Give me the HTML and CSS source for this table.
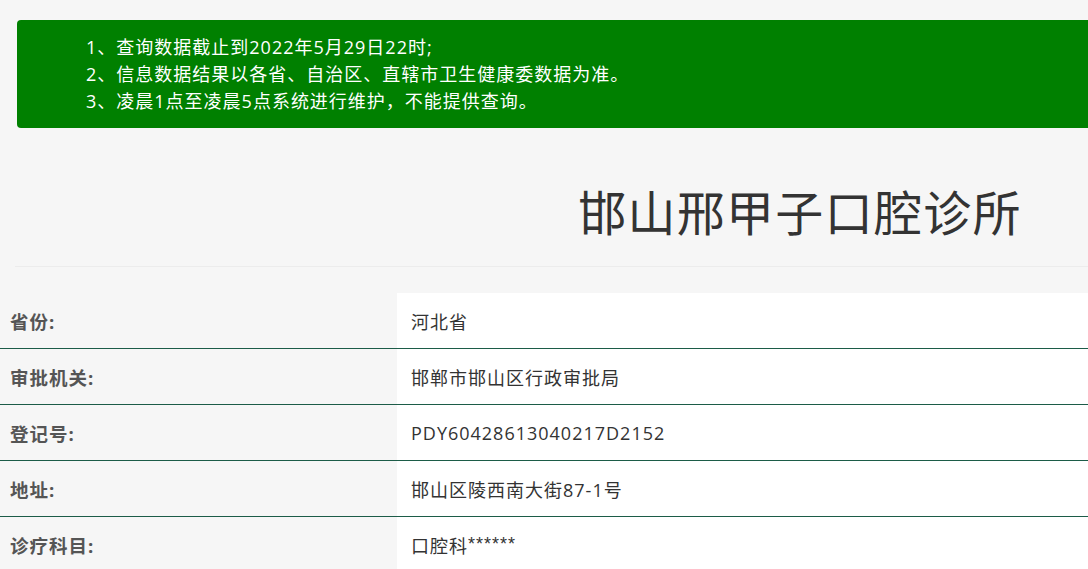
FILE: index.html
```html
<!DOCTYPE html>
<html lang="zh-CN">
<head>
<meta charset="utf-8">
<title>邯山邢甲子口腔诊所</title>
<link rel="stylesheet" href="styles.css">
</head>
<body>
<div class="page">
  <div class="notice">
    <p>1、查询数据截止到2022年5月29日22时;</p>
    <p>2、信息数据结果以各省、自治区、直辖市卫生健康委数据为准。</p>
    <p>3、凌晨1点至凌晨5点系统进行维护，不能提供查询。</p>
  </div>
  <h1 class="title">邯山邢甲子口腔诊所</h1>
  <div class="divider"></div>
  <div class="info">
    <div class="row"><div class="label">省份:</div><div class="value">河北省</div></div>
    <div class="row"><div class="label">审批机关:</div><div class="value">邯郸市邯山区行政审批局</div></div>
    <div class="row"><div class="label">登记号:</div><div class="value">PDY60428613040217D2152</div></div>
    <div class="row"><div class="label">地址:</div><div class="value">邯山区陵西南大街87-1号</div></div>
    <div class="row"><div class="label">诊疗科目:</div><div class="value">口腔科<span class="mask">******</span></div></div>
  </div>
</div>
</body>
</html>
```

FILE: styles.css
```css
html, body {
  margin: 0;
  padding: 0;
  background: #f6f6f6;
}
body {
  font-family: "Open Sans", "Noto Sans CJK SC", sans-serif;
  color: #333;
  letter-spacing: 1px;
}
.page {
  width: 1600px;
  padding-top: 20px;
}
.notice {
  margin-left: 17px;
  width: 1560px;
  background: #008000;
  border-radius: 4px;
  padding: 14px 0 13px 69px;
  box-sizing: border-box;
  color: #fff;
  font-size: 18px;
  line-height: 27px;
}
.notice p {
  margin: 0;
}
.title {
  margin: 0;
  margin-left: 15px;
  width: 1570px;
  text-align: center;
  font-size: 48px;
  font-weight: 400;
  letter-spacing: 1.3px;
  line-height: 1;
  padding-top: 61px;
  padding-bottom: 29px;
  color: #333;
}
.divider {
  margin-left: 15px;
  width: 1570px;
  height: 1px;
  background: #ececec;
  margin-bottom: 26px;
}
.info {
  width: 1600px;
}
.row {
  display: flex;
  height: 55px;
  border-bottom: 1px solid #1c5c48;
  font-size: 18px;
}
.label {
  width: 387px;
  padding-left: 10px;
  display: flex;
  align-items: center;
  font-weight: 700;
  font-size: 18.5px;
  color: #555;
}
.value {
  flex: 1;
  background: #fff;
  padding-left: 14px;
  display: flex;
  align-items: center;
  color: #333;
}
.mask {
  letter-spacing: 1px;
  font-family: "Liberation Sans", sans-serif;
  font-size: 18px;
}
```
